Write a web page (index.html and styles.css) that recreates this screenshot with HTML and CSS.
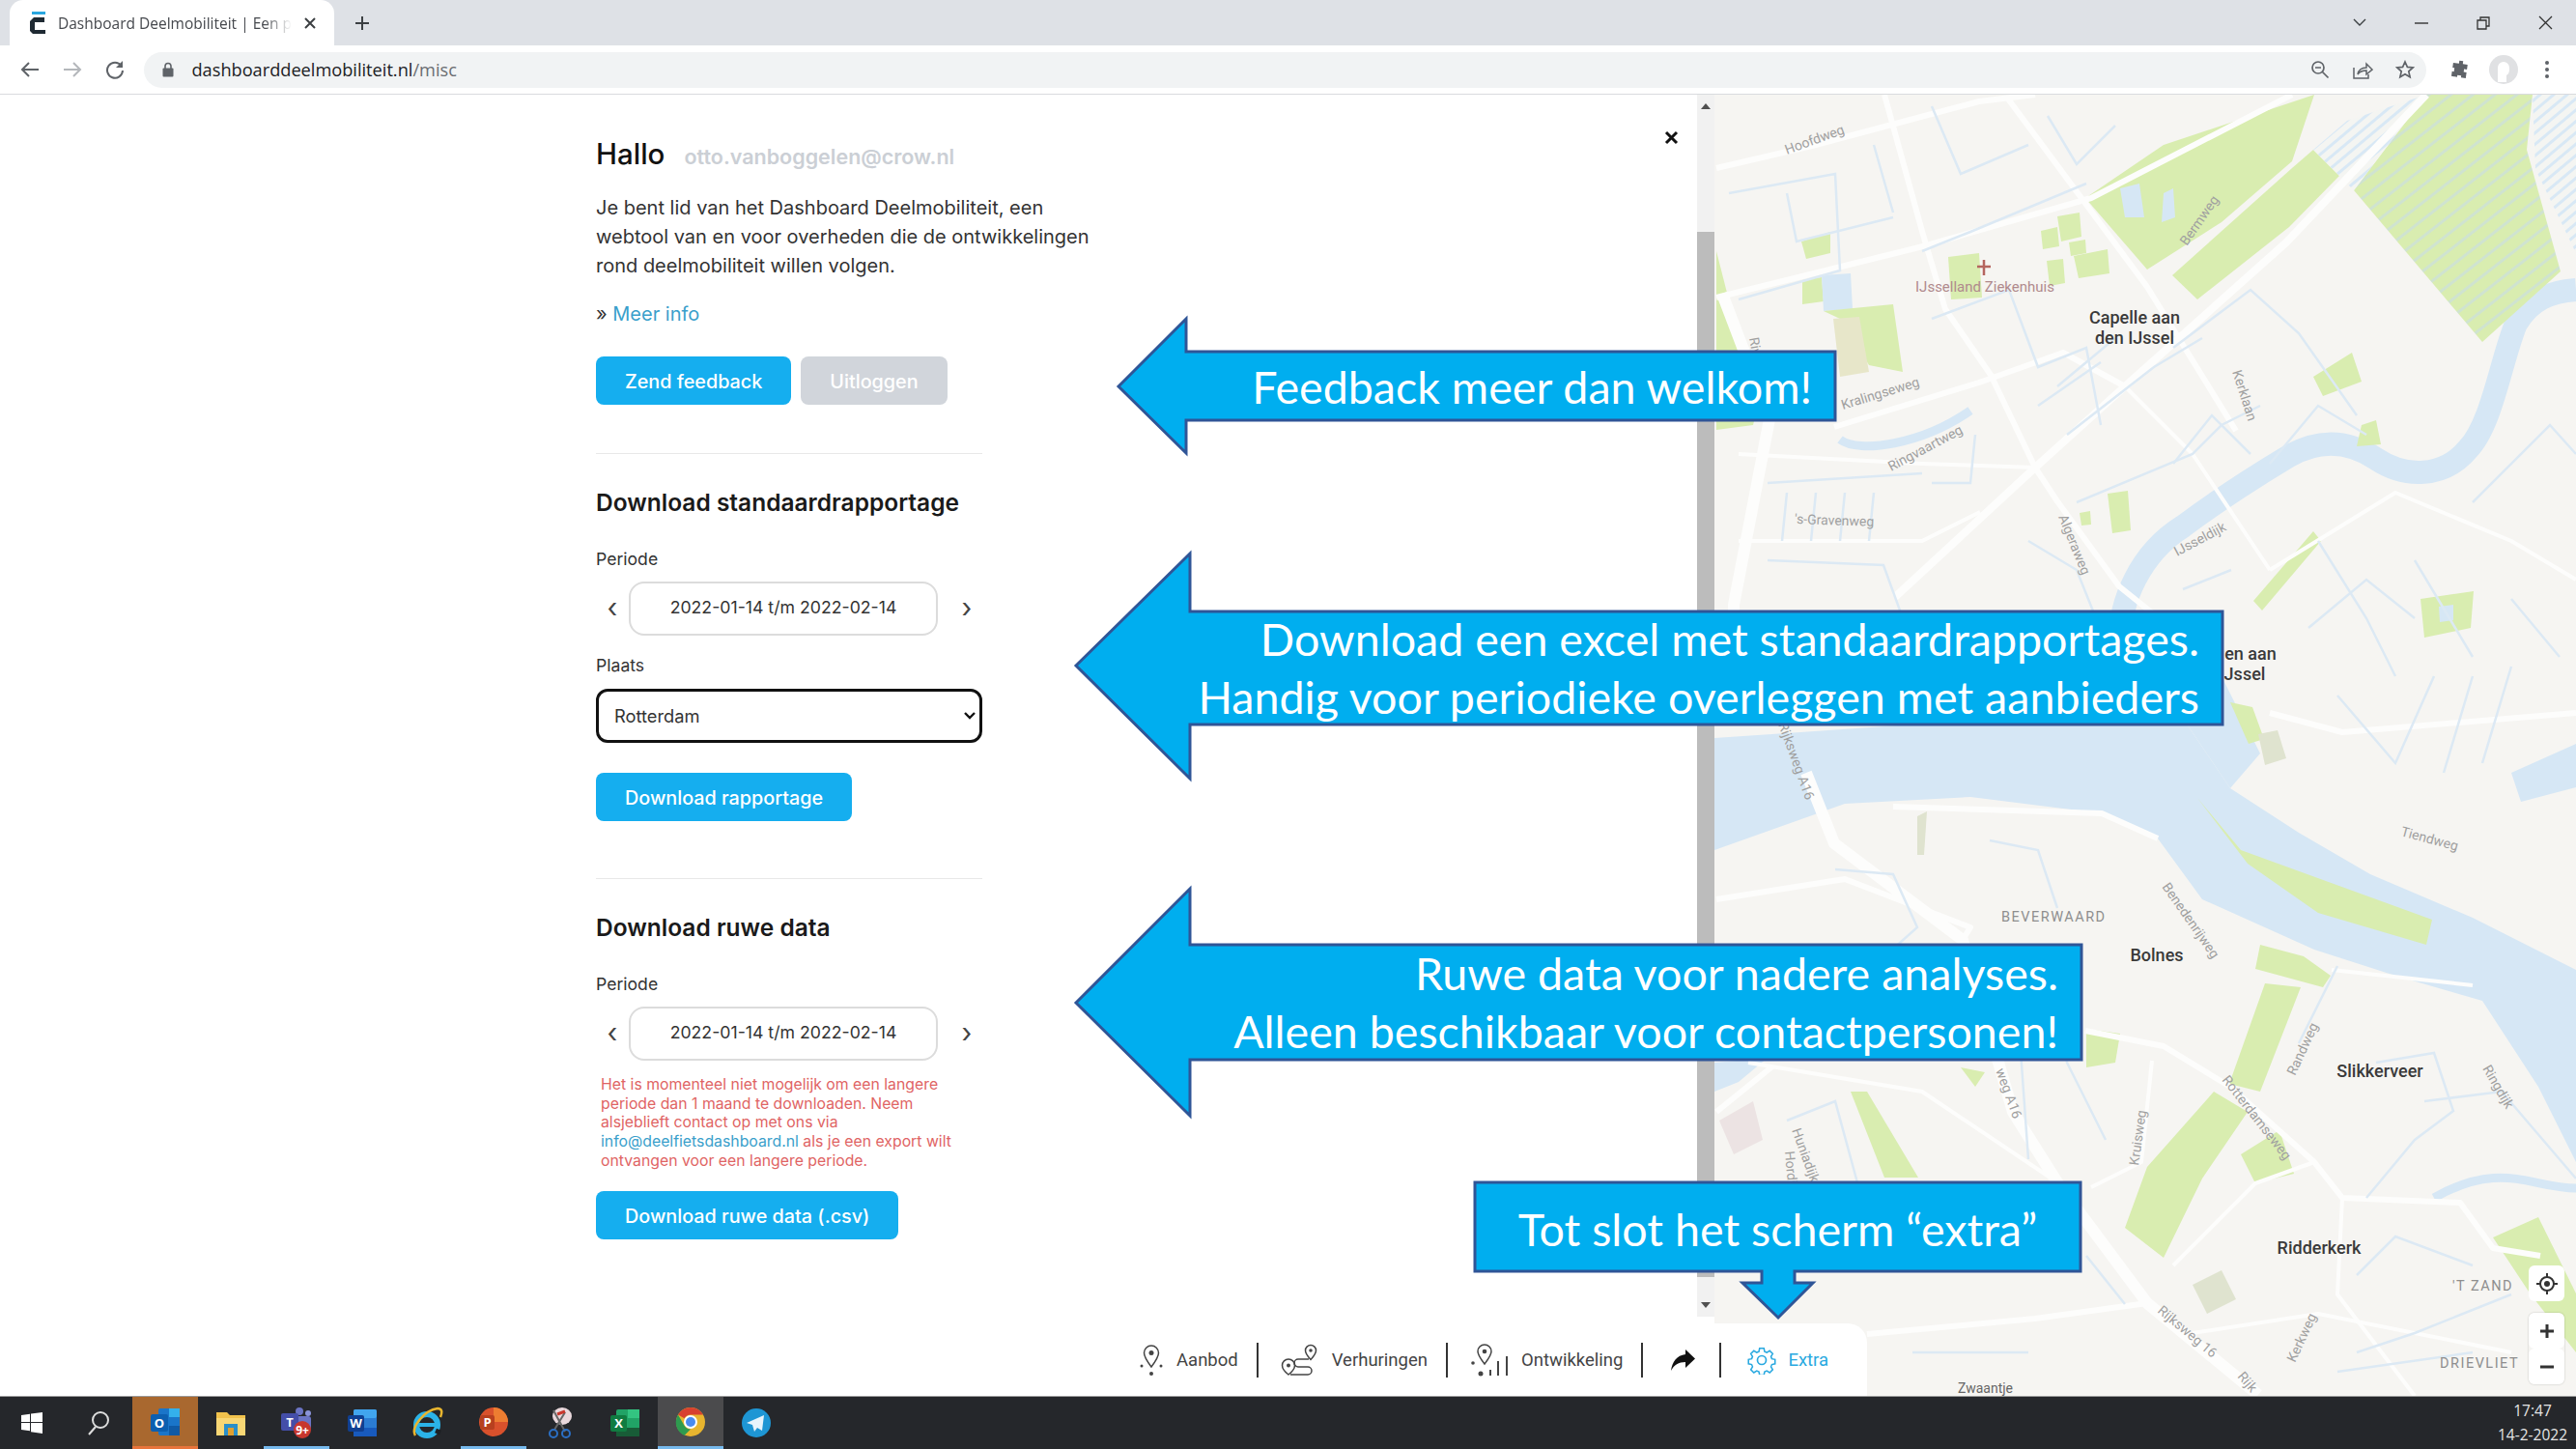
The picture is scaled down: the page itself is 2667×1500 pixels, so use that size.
FILE: index.html
```html
<!DOCTYPE html>
<html lang="en">
<head>
  <meta charset="UTF-8" />
  <title>Dashboard Deelmobiliteit</title>
  <link rel="stylesheet" href="styles.css">
</head>
<body>

  <!-- browser chrome -->
  <div class="tabstrip">
    <div class="tab">
      <svg class="favicon" width="18" height="24" viewBox="0 0 18 24"><rect x="3" y="0" width="14" height="3" fill="#2aa7df"/><path d="M16 6H5L1 10v10l3 3h13v-4H6V11h10z" fill="#1f2a33"/></svg>
      <span class="tab-title">Dashboard Deelmobiliteit | Een platform</span>
      <svg class="tab-close" width="12" height="12" viewBox="0 0 12 12"><path d="M1 1l10 10M11 1L1 11" stroke="#3c4043" stroke-width="2"/></svg>
    </div>
    <div class="tab-new"><svg width="16" height="16" viewBox="0 0 16 16"><path d="M8 1v14M1 8h14" stroke="#3c4043" stroke-width="2"/></svg></div>
    <div class="spacer"></div>
    <div class="tab-list"><svg width="14" height="9" viewBox="0 0 14 9"><path d="M1 1l6 6 6-6" fill="none" stroke="#3c4043" stroke-width="1.4"/></svg></div>
    <div class="win-btn"><svg width="14" height="2" viewBox="0 0 14 2"><path d="M0 1h14" stroke="#333" stroke-width="1.4"/></svg></div>
    <div class="win-btn"><svg width="14" height="14" viewBox="0 0 14 14"><path d="M1 4h9v9H1zM4 4V1h9v9h-3" fill="none" stroke="#333" stroke-width="1.3"/></svg></div>
    <div class="win-btn"><svg width="15" height="15" viewBox="0 0 15 15"><path d="M1 1l13 13M14 1L1 14" stroke="#333" stroke-width="1.3"/></svg></div>
  </div>

  <div class="toolbar">
    <div class="tool"><svg width="20" height="18" viewBox="0 0 20 18"><path d="M19 9H3M9 2L2 9l7 7" fill="none" stroke="#5f6368" stroke-width="2"/></svg></div>
    <div class="tool"><svg width="20" height="18" viewBox="0 0 20 18"><path d="M1 9h16M11 2l7 7-7 7" fill="none" stroke="#b4b7bb" stroke-width="2"/></svg></div>
    <div class="tool"><svg width="20" height="20" viewBox="0 0 20 20"><path d="M16.5 6A8 8 0 1 0 18 11" fill="none" stroke="#5f6368" stroke-width="2"/><path d="M18 1v7h-7z" fill="#5f6368"/></svg></div>
    <div class="omnibox">
      <svg class="lock" width="12" height="16" viewBox="0 0 12 16"><path d="M3 7V4.5a3 3 0 0 1 6 0V7" fill="none" stroke="#5f6368" stroke-width="1.6"/><rect x="0.5" y="6.5" width="11" height="9" rx="1" fill="#5f6368"/></svg>
      <span class="url">dashboarddeelmobiliteit.nl<span class="url-path">/misc</span></span>
      <div class="spacer"></div>
      <div class="tool"><svg width="20" height="20" viewBox="0 0 20 20"><circle cx="8" cy="8" r="6" fill="none" stroke="#5f6368" stroke-width="1.7"/><path d="M5 8h6M12.5 12.5l6 6" stroke="#5f6368" stroke-width="1.7"/></svg></div>
      <div class="tool"><svg width="22" height="20" viewBox="0 0 22 20"><path d="M2 8v11h15v-4" fill="none" stroke="#5f6368" stroke-width="1.5"/><path d="M6 15c1-5 5-7 9-7V4l6 6-6 5v-4c-4 0-7 1-9 4z" fill="none" stroke="#5f6368" stroke-width="1.5"/></svg></div>
      <div class="tool"><svg width="20" height="20" viewBox="0 0 20 20"><path d="M10 2l2.4 5.4 5.8.6-4.4 3.9 1.3 5.8L10 14.700l-5.100 3 1.300-5.800L1.800 8l5.800-.6z" fill="none" stroke="#5f6368" stroke-width="1.700"/></svg></div>
    </div>
    <div class="tool tool-ext"><svg width="20" height="20" viewBox="0 0 20 20"><path d="M8 1h4v3h5v5h-3v3h3v6h-5v-2h-4v2H2v-5h2V9H2V4h6z" fill="#5f6368" transform="rotate(8 10 10)"/></svg></div>
    <div class="tool tool-ext"><svg width="30" height="30" viewBox="0 0 30 30"><circle cx="15" cy="15" r="15" fill="#e0e1e3"/><path d="M9 28V13a6 6 0 0 1 12 0v3a6 6 0 0 1-3 5v7z" fill="#fff"/></svg></div>
    <div class="tool tool-ext"><svg width="6" height="20" viewBox="0 0 6 20"><circle cx="3" cy="3" r="2" fill="#5f6368"/><circle cx="3" cy="10" r="2" fill="#5f6368"/><circle cx="3" cy="17" r="2" fill="#5f6368"/></svg></div>
  </div>

  <!-- page -->
  <div class="main">
    <div class="panel">
      <div class="close-btn"><svg width="15" height="15" viewBox="0 0 15 15"><path d="M2 2l11 11M13 2L2 13" stroke="#111" stroke-width="3"/></svg></div>

      <div class="hello">
        <span class="hello-name">Hallo</span>
        <span class="hello-mail">otto.vanboggelen@crow.nl</span>
      </div>
      <p class="intro">Je bent lid van het Dashboard Deelmobiliteit, een webtool van en voor overheden die de ontwikkelingen rond deelmobiliteit willen volgen.</p>
      <p class="more">» <a href="#">Meer info</a></p>
      <div class="btn-row">
        <button class="btn">Zend feedback</button>
        <button class="btn btn-grey">Uitloggen</button>
      </div>

      <hr class="divider">

      <h2>Download standaardrapportage</h2>
      <label class="field-label">Periode</label>
      <div class="period">
        <span class="period-arrow">‹</span>
        <div class="period-box">2022-01-14 t/m 2022-02-14</div>
        <span class="period-arrow">›</span>
      </div>
      <label class="field-label field-label-place">Plaats</label>
      <div class="place-wrap">
        <select class="place"><option>Rotterdam</option></select>
        <svg class="place-chevron" width="12" height="8" viewBox="0 0 12 8"><path d="M1 1l5 5 5-5" fill="none" stroke="#111" stroke-width="2.4"/></svg>
      </div>
      <button class="btn btn-report">Download rapportage</button>

      <hr class="divider divider-second">

      <h2>Download ruwe data</h2>
      <label class="field-label">Periode</label>
      <div class="period">
        <span class="period-arrow">‹</span>
        <div class="period-box">2022-01-14 t/m 2022-02-14</div>
        <span class="period-arrow">›</span>
      </div>
      <p class="notice">Het is momenteel niet mogelijk om een langere periode dan 1 maand te downloaden. Neem alsjeblieft contact op met ons via <a href="#">info@deelfietsdashboard.nl</a> als je een export wilt ontvangen voor een langere periode.</p>
      <button class="btn btn-raw">Download ruwe data (.csv)</button>
    </div>

    <div class="scrollbar">
      <span class="scroll-up"></span>
      <div class="scroll-thumb"></div>
      <span class="scroll-down"></span>
    </div>

    <div class="map">
      <svg class="map-svg" viewBox="1775 98 892 1347" width="892" height="1347">
        <defs>
          <pattern id="polder" width="14" height="14" patternUnits="userSpaceOnUse" patternTransform="rotate(52)">
            <rect width="14" height="14" fill="#d9edb0"/>
            <rect width="3" height="14" fill="#cfe3d0"/>
          </pattern>
          <pattern id="ditches" width="9" height="9" patternUnits="userSpaceOnUse" patternTransform="rotate(50)">
            <rect width="9" height="9" fill="#f4f5f2"/>
            <rect width="3" height="9" fill="#d8e8f5"/>
          </pattern>
        </defs>
        <rect x="1775" y="98" width="892" height="1347" fill="#f6f5f2"/>

        <g class="map-soft">
        <!-- water -->
        <path class="water" d="M1775 764L1864 758L2050 745L2263 748L2309 816L2380 862L2454 905L2560 950L2667 1004V1203L2628 1125L2570 1036L2480 1010L2396 983L2280 931L2234 868L2176 842L2040 825L1910 832L1775 880Z"/>
        <path class="water" d="M2263 748L2300 700L2340 780L2309 816Z"/>
        <path class="water" d="M1775 1100L1830 1095L1800 1120L1775 1130Z"/>
        <path class="river" d="M2195 680C2190 620 2220 570 2260 545C2300 515 2340 490 2370 472C2400 455 2430 455 2460 475C2490 495 2530 495 2555 465C2580 440 2590 370 2605 335C2620 310 2640 302 2667 300"/>
        <path class="river river-thin" d="M1905 455C1925 470 1990 460 2040 425"/>
        <path class="river river-thin" d="M2520 1240C2590 1200 2620 1230 2667 1230"/>
        <path class="water" d="M2600 800L2667 770V815L2610 830Z"/>

        <!-- parks -->
        <path class="park" d="M2159 205L2240 150L2396 98L2373 167L2300 230L2223 279Z"/>
        <path class="park" d="M2249 285L2373 174L2395 155L2422 182L2370 235L2275 310Z"/>
        <path fill="url(#polder)" d="M2512 98H2622L2616 155L2651 281L2570 354L2437 197Z"/>
        <path fill="url(#ditches)" d="M2622 98H2667V262L2625 175Z"/>
        <path fill="url(#ditches)" d="M2395 155L2430 125L2512 98L2437 197L2422 182Z"/>
        <path class="water" d="M2195 195L2215 190L2220 225L2200 225ZM2240 200L2250 195L2252 225L2238 230Z"/>
        <path class="park" d="M2017 266L2049 262L2052 308L2020 310Z"/>
        <path class="park" d="M2113 239L2130 235L2132 255L2115 258Z"/>
        <path class="park" d="M2130 224L2153 220L2155 245L2134 250Z"/>
        <path class="park" d="M2142 251L2159 248L2160 262L2144 265Z"/>
        <path class="park" d="M2119 270L2136 268L2138 293L2122 296Z"/>
        <path class="park" d="M2147 265L2182 258L2184 283L2152 288Z"/>
        <path class="park" d="M1866 290L1886 287L1888 312L1866 315Z"/>
        <path class="water" d="M1886 285L1916 283L1918 320L1888 322Z"/>
        <path class="park" d="M1888 322L1960 315L1970 385L1935 378L1905 330Z"/>
        <path class="patch-tan" d="M1898 330L1925 328L1935 385L1905 390Z"/>
        <path class="park" d="M1777 260L1800 350L1805 400L1777 400Z"/>
        <path class="park" d="M1777 420L1820 420L1815 440L1777 445Z"/>
        <path class="park" d="M1865 250L1895 240L1895 262L1870 268Z"/>
        <path class="park" d="M2395 390L2435 365L2445 395L2405 410Z"/>
        <path class="park" d="M2445 440L2460 435L2465 460L2440 462Z"/>
        <path class="park" d="M2333 622L2395 550L2403 560L2342 632Z"/>
        <path class="park" d="M2506 620L2561 612L2558 650L2510 660Z"/>
        <path class="water" d="M2525 628L2540 626L2540 642L2526 644Z"/>
        <path class="park" d="M2182 511L2203 508L2206 549L2187 552Z"/>
        <path class="park" d="M2153 531L2164 529L2165 543L2155 544Z"/>
        <path class="park" d="M2309 727L2332 732L2344 765L2328 770Z"/>
        <path class="park-dim" d="M2338 760L2358 756L2367 785L2345 792Z"/>
        <path class="park" d="M2275 826L2320 880L2518 952L2512 978L2400 945L2327 894Z"/>
        <path class="park" d="M2340 978L2385 990L2413 1010L2405 1022L2335 1003Z"/>
        <path class="park" d="M2345 1018L2382 1022L2340 1130L2308 1122Z"/>
        <path class="park" d="M2292 1130L2327 1151L2280 1220L2240 1302L2200 1271L2223 1208Z"/>
        <path class="park" d="M1916 1130L1933 1130L1986 1219L1951 1219Z"/>
        <path class="park" d="M2160 1065L2195 1070L2190 1100L2160 1105Z"/>
        <path class="park" d="M2030 1105L2055 1110L2045 1125Z"/>
        <path class="park" d="M2320 1195L2360 1170L2375 1215L2335 1225Z"/>
        <path class="park" d="M2581 1281L2628 1260L2667 1339V1400L2620 1340Z"/>
        <path class="park-dim" d="M2270 1330L2300 1315L2315 1345L2285 1360Z"/>
        <path class="park-dim" d="M1985 845L1995 840L1992 885L1985 885Z"/>
        <path class="patch" d="M1780 1160L1815 1140L1825 1180L1795 1195Z"/>

        <!-- roads -->
        <path class="road" d="M1777 174L1876 151L2049 105L2107 98"/>
        <path class="road" d="M1951 98L1991 243L2014 320L2061 388L2107 484"/>
        <path class="road road-wide" d="M2512 98L2367 251L2200 400L2107 484L1962 618"/>
        <path class="road" d="M2078 101L2223 297L2315 446"/>
        <path class="road" d="M1777 308L1991 255L2165 205L2373 98"/>
        <path class="road" d="M1899 442L2049 396L2136 365L2200 400"/>
        <path class="road road-main" d="M1783 304L1818 396L1832 434L1795 626L1795 700"/>
        <path class="road" d="M2107 484L2130 519L2194 607L2260 660"/>
        <path class="road road-thin" d="M2200 400L2270 470L2350 590"/>
        <path class="road road-thin" d="M1800 470L1990 480L2107 484"/>
        <path class="road road-thin" d="M2350 590L2480 510L2600 560L2667 600"/>
        <path class="road road-main" d="M1870 800L1899 873L2032 973L2084 1151L2130 1224L2223 1349L2338 1444"/>
        <path class="road" d="M1777 931L1910 910L2040 960L2032 973"/>
        <path class="road" d="M2159 1067L2240 1083L2309 1125L2396 1203L2425 1240L2547 1245L2581 1292L2630 1300"/>
        <path class="road road-thin" d="M2228 1098L2217 1203L2165 1229"/>
        <path class="road" d="M2350 738L2425 758L2667 738"/>
        <path class="road" d="M1933 1381L2107 1365L2223 1349"/>
        <path class="road" d="M1835 1104L1777 1151"/>
        <path class="road road-thin" d="M1810 1100L1990 1130L2130 1224"/>
        <path class="road" d="M1960 835L2176 842L2234 868"/>
        <path class="road road-thin" d="M2414 1004L2560 1020"/>
        <path class="road road-thin" d="M2396 1203L2335 1225L2250 1310"/>
        <path class="road road-thin" d="M2425 1240L2420 1340L2500 1445"/>
        <path class="road road-thin" d="M2270 1380L2400 1360L2600 1400"/>
        <path class="road road-thin" d="M1800 560L1990 560L2050 530"/>

        <!-- canals -->
        <path class="canal" d="M1790 200L1900 180L1905 280L1800 310"/>
        <path class="canal" d="M1990 260L2040 240L2160 190"/>
        <path class="canal" d="M2000 330L2080 300L2110 380L2160 360L2175 440"/>
        <path class="canal" d="M2250 360L2290 330L2330 300L2380 345L2440 430"/>
        <path class="canal" d="M2340 420L2300 440L2270 470L2150 520"/>
        <path class="canal" d="M2000 500L2040 500L2045 450"/>
        <path class="canal" d="M1830 500L1990 490M1850 510L1845 560M1880 510L1875 560M1910 510L1905 560M1940 510L1935 560"/>
        <path class="canal" d="M1830 580L1950 585L1970 640L1820 650"/>
        <path class="canal" d="M2400 560L2450 640L2480 700M2500 580L2560 680"/>
        <path class="canal" d="M2420 720L2480 790L2520 700M2560 700L2530 800M2600 690L2570 790"/>
        <path class="canal" d="M2460 1100L2520 1090L2540 1150L2500 1180L2450 1240"/>
        <path class="canal" d="M2380 1080L2420 1000"/>
        <path class="canal" d="M2090 1060L2100 1200M2130 1020L2140 1100L2180 1180"/>
        <path class="canal" d="M1850 1160L1900 1140L1930 1250M1810 1230L1870 1230"/>
        <path class="canal" d="M2440 1400L2500 1380L2600 1340M2420 1420L2560 1400"/>
        <path class="canal" d="M2160 1300L2200 1350M1980 1400L2100 1400"/>
        <path class="canal" d="M2000 110L2030 180L2100 150M2120 120L2150 170L2190 130"/>
        <path class="canal" d="M1850 200L1860 250L1960 225M1940 150L1960 220"/>
        <path class="canal" d="M2130 400L2190 350M2110 420L2175 375M2140 450L2230 380L2280 350"/>
        <path class="canal" d="M2250 480L2290 430L2330 470M2350 480L2400 420L2450 450"/>
        <path class="canal" d="M2100 560L2150 590L2170 640M2260 610L2310 590M2390 650L2450 600L2500 640"/>
        <path class="canal" d="M2560 520L2640 440L2667 470M2600 620L2650 680"/>
        <path class="canal" d="M1900 900L1960 905L1985 960L1940 1000M2060 870L2110 880L2130 940"/>
        <path class="canal" d="M2440 1320L2480 1280L2560 1310M2510 1140L2590 1130L2667 1220"/>
        </g>

        <!-- labels -->
        <text class="m-road" transform="translate(1850 160) rotate(-20)">Hoofdweg</text>
        <text class="m-road" transform="translate(1908 424) rotate(-17)">Kralingseweg</text>
        <text class="m-road" transform="translate(1958 488) rotate(-28)">Ringvaartweg</text>
        <text class="m-road" transform="translate(1858 542) rotate(2)">'s-Gravenweg</text>
        <text class="m-road" transform="translate(2131 535) rotate(68)">Algeraweg</text>
        <text class="m-road" transform="translate(2254 576) rotate(-28)">IJsseldijk</text>
        <text class="m-road" transform="translate(2264 255) rotate(-55)">Bermweg</text>
        <text class="m-road" transform="translate(2311 385) rotate(72)">Kerklaan</text>
        <text class="m-road" transform="translate(1811 350) rotate(80)">Rivi</text>
        <text class="m-road" transform="translate(1841 750) rotate(70)">Rijksweg A16</text>
        <text class="m-road" transform="translate(2066 1108) rotate(70)">weg A16</text>
        <text class="m-road" transform="translate(2485 865) rotate(15)">Tiendweg</text>
        <text class="m-road" transform="translate(2238 918) rotate(55)">Benedenrijweg</text>
        <text class="m-road" transform="translate(2376 1114) rotate(-65)">Randweg</text>
        <text class="m-road" transform="translate(2570 1106) rotate(60)">Ringdijk</text>
        <text class="m-road" transform="translate(2300 1118) rotate(52)">Rotterdamseweg</text>
        <text class="m-road" transform="translate(2233 1358) rotate(40)">Rijksweg 16</text>
        <text class="m-road" transform="translate(2316 1425) rotate(50)">Rijk</text>
        <text class="m-road" transform="translate(2376 1411) rotate(-65)">Kerkweg</text>
        <text class="m-road" transform="translate(2214 1207) rotate(-82)">Kruisweg</text>
        <text class="m-road" transform="translate(1855 1170) rotate(70)">Huniadijk</text>
        <text class="m-road" transform="translate(1848 1192) rotate(85)">Hordijk</text>
        <text class="m-area" x="2072" y="954">BEVERWAARD</text>
        <text class="m-area" x="2539" y="1336">'T ZAND</text>
        <text class="m-area" x="2526" y="1416">DRIEVLIET</text>
        <text class="m-road m-dark" x="2027" y="1442">Zwaantje</text>
        <text class="m-hospital" x="2055" y="302" text-anchor="middle">IJsselland Ziekenhuis</text>
        <path d="M2054 269v16M2047 276h14" stroke="#b5655f" stroke-width="2.500"/>
        <text class="m-place" x="2210" y="335" text-anchor="middle">Capelle aan</text>
        <text class="m-place" x="2210" y="356" text-anchor="middle">den IJssel</text>
        <text class="m-place" x="2330" y="683" text-anchor="middle">en aan</text>
        <text class="m-place" x="2324" y="704" text-anchor="middle">Jssel</text>
        <text class="m-place" x="2233" y="995" text-anchor="middle">Bolnes</text>
        <text class="m-place" x="2464" y="1115" text-anchor="middle">Slikkerveer</text>
        <text class="m-place" x="2401" y="1298" text-anchor="middle">Ridderkerk</text>
      </svg>

      <div class="map-controls">
        <div class="map-btn"><svg width="22" height="22" viewBox="0 0 22 22"><circle cx="11" cy="11" r="7" fill="none" stroke="#333" stroke-width="2"/><circle cx="11" cy="11" r="3" fill="#333"/><path d="M11 0v4M11 18v4M0 11h4M18 11h4" stroke="#333" stroke-width="2"/></svg></div>
        <div class="map-zoom">
          <div class="map-btn"><svg width="14" height="14" viewBox="0 0 14 14"><path d="M7 0v14M0 7h14" stroke="#333" stroke-width="3"/></svg></div>
          <div class="map-btn"><svg width="14" height="4" viewBox="0 0 14 4"><path d="M0 2h14" stroke="#333" stroke-width="3"/></svg></div>
        </div>
      </div>
    </div>

    <!-- menu floating over the page and the map -->
    <nav class="bottom-nav">
      <a class="nav-item" href="#">
        <svg width="26" height="34" viewBox="0 0 26 34"><path d="M13 2a7.500 7.500 0 0 0-7.500 7.500C5.500 14 13 24 13 24s7.500-10 7.500-14.500A7.500 7.500 0 0 0 13 2z" fill="none" stroke="#444" stroke-width="1.500"/><circle cx="13" cy="9.500" r="2.500" fill="#444"/><circle cx="3" cy="23" r="1.500" fill="#444"/><circle cx="23" cy="23" r="1.500" fill="#444"/><circle cx="13" cy="31" r="2" fill="#444"/></svg>
        Aanbod
      </a>
      <span class="nav-sep"></span>
      <a class="nav-item" href="#">
        <svg width="40" height="34" viewBox="0 0 40 34"><path d="M31 1.500a5.500 5.500 0 0 0-5.500 5.500c0 3.500 5.500 9.500 5.500 9.500s5.500-6 5.500-9.500A5.500 5.500 0 0 0 31 1.500z" fill="none" stroke="#444" stroke-width="1.500"/><circle cx="31" cy="7" r="1.800" fill="#444"/><path d="M8 16a6.500 6.500 0 0 0-6.500 6.500C1.500 27 8 32 8 32s6.500-5 6.500-9.500A6.500 6.500 0 0 0 8 16z" fill="none" stroke="#444" stroke-width="1.500"/><circle cx="8" cy="22.500" r="2" fill="#444"/><path d="M29 16H18a3.500 3.500 0 0 0 0 8h10a3.500 3.500 0 0 1 0 8H10" fill="none" stroke="#444" stroke-width="1.500"/></svg>
        Verhuringen
      </a>
      <span class="nav-sep"></span>
      <a class="nav-item" href="#">
        <svg width="40" height="34" viewBox="0 0 40 34"><path d="M15 1a7 7 0 0 0-7 7c0 4 7 13 7 13s7-9 7-13a7 7 0 0 0-7-7z" fill="none" stroke="#444" stroke-width="1.500"/><circle cx="15" cy="8" r="2.300" fill="#444"/><circle cx="3" cy="20" r="1.800" fill="#444"/><circle cx="11" cy="31" r="2.500" fill="#444"/><path d="M21 33v-6M29 33V18M38 33V13" stroke="#444" stroke-width="2"/></svg>
        Ontwikkeling
      </a>
      <span class="nav-sep"></span>
      <a class="nav-item nav-share" href="#">
        <svg width="27" height="24" viewBox="0 0 27 24"><path d="M16 1l10 9.500L16 20v-6C9 14 4 17 1 23 2 14 7 7 16 6z" fill="#111"/></svg>
      </a>
      <span class="nav-sep"></span>
      <a class="nav-item nav-active" href="#">
        <svg width="30" height="30" viewBox="0 0 30 30"><path d="M12.500 1.500h5l.8 3.700 2.500 1 3.300-2 3.500 3.500-2 3.300 1 2.500 3.700.8v5l-3.700.8-1 2.500 2 3.300-3.500 3.500-3.300-2-2.500 1-.8 3.700h-5l-.8-3.700-2.500-1-3.300 2-3.500-3.500 2-3.300-1-2.500-3.700-.8v-5l3.700-.8 1-2.500-2-3.300 3.500-3.500 3.300 2 2.500-1z" transform="translate(1.500 1.500) scale(.9)" fill="none" stroke="#29a9e0" stroke-width="1.700"/><circle cx="15" cy="15" r="4.500" fill="none" stroke="#29a9e0" stroke-width="1.700"/></svg>
        Extra
      </a>
    </nav>

    <!-- slide annotations on top of the screenshot -->
    <div class="callout callout-feedback">
      <svg width="742" height="139" viewBox="0 0 742 139"><polygon points="0,70 70,0 70,34 742,34 742,105 70,105 70,139"/></svg>
      <div class="callout-text">Feedback meer dan welkom!</div>
    </div>
    <div class="callout callout-report">
      <svg width="1187" height="233" viewBox="0 0 1187 233"><polygon points="0,116 118,0 118,60 1187,60 1187,177 118,177 118,233"/></svg>
      <div class="callout-text">Download een excel met standaardrapportages.<br>Handig voor periodieke overleggen met aanbieders</div>
    </div>
    <div class="callout callout-raw">
      <svg width="1041" height="235" viewBox="0 0 1041 235"><polygon points="0,118 118,0 118,58 1041,58 1041,177 118,177 118,235"/></svg>
      <div class="callout-text">Ruwe data voor nadere analyses.<br>Alleen beschikbaar voor contactpersonen!</div>
    </div>
    <div class="callout callout-extra">
      <svg width="627" height="140" viewBox="0 0 627 140"><polygon points="0,0 627,0 627,92 331,92 331,104 350,104 314,140 277,104 297,104 297,92 0,92"/></svg>
      <div class="callout-text">Tot slot het scherm “extra”</div>
    </div>
  </div>

  <!-- windows taskbar -->
  <div class="taskbar">
    <div class="task task-start"><svg width="22" height="22" viewBox="0 0 22 22"><path d="M0 3l9-1.300V10H0zM10 1.500L22 0v10H10zM0 11h9v8.300L0 18zM10 11h12v11l-12-1.700z" fill="#fff"/></svg></div>
    <div class="task task-search"><svg width="24" height="26" viewBox="0 0 24 26"><circle cx="14" cy="10" r="8" fill="none" stroke="#ddd" stroke-width="2"/><path d="M9 17L2 25" stroke="#ddd" stroke-width="2"/></svg></div>
    <div class="task task-outlook">
      <svg width="34" height="32" viewBox="0 0 34 32"><rect x="10" y="2" width="22" height="28" rx="2" fill="#1a75c9"/><rect x="21" y="2" width="11" height="9" fill="#34b0ec"/><rect x="21" y="20" width="11" height="10" fill="#0f5aa6"/><rect x="2" y="8" width="18" height="18" rx="2" fill="#0c5fb0"/><text class="tile-letter" x="11" y="22" text-anchor="middle">O</text></svg>
    </div>
    <div class="task">
      <svg width="32" height="28" viewBox="0 0 32 28"><path d="M1 3h11l3 3h16v20H1z" fill="#f1c24c"/><rect x="1" y="9" width="30" height="18" fill="#f8d775"/><rect x="9" y="15" width="14" height="12" fill="#2a8fc9"/><rect x="13" y="19" width="6" height="8" fill="#e0a030"/></svg>
    </div>
    <div class="task task-running">
      <svg width="36" height="36" viewBox="0 0 36 36"><circle cx="21" cy="7" r="4" fill="#6b74c4"/><circle cx="30" cy="9" r="3" fill="#8a93d8"/><rect x="15" y="12" width="18" height="14" rx="3" fill="#6b74c4"/><rect x="2" y="9" width="18" height="18" rx="2" fill="#444ea8"/><text class="tile-letter" x="11" y="23" text-anchor="middle">T</text><circle cx="24" cy="26" r="9" fill="#c8372d"/><text class="tile-badge" x="24" y="31" text-anchor="middle">9+</text></svg>
    </div>
    <div class="task">
      <svg width="34" height="32" viewBox="0 0 34 32"><rect x="8" y="2" width="24" height="28" rx="2" fill="#2b7cd3"/><rect x="8" y="2" width="24" height="9" rx="2" fill="#41a5ee"/><rect x="8" y="21" width="24" height="9" fill="#185abd"/><rect x="2" y="8" width="17" height="17" rx="2" fill="#103f91"/><text class="tile-letter" x="10.500" y="21" text-anchor="middle">W</text></svg>
    </div>
    <div class="task">
      <svg width="32" height="34" viewBox="0 0 32 34"><circle cx="15" cy="19" r="11" fill="none" stroke="#2bb3e8" stroke-width="6"/><path d="M6 19h18" stroke="#2bb3e8" stroke-width="4"/><path d="M24 25l5 2" stroke="#1d2024" stroke-width="5"/><path d="M3 30C-2 22 12 4 26 2c5 0 5 4 3 9" fill="none" stroke="#e8b52f" stroke-width="2.500"/></svg>
    </div>
    <div class="task task-running">
      <svg width="34" height="34" viewBox="0 0 34 34"><circle cx="17" cy="17" r="15" fill="#d9512c"/><path d="M17 2a15 15 0 0 1 15 15H17z" fill="#ed7d31"/><rect x="3" y="10" width="15" height="15" rx="2" fill="#b7401f"/><text class="tile-letter" x="10.500" y="22" text-anchor="middle">P</text></svg>
    </div>
    <div class="task">
      <svg width="28" height="34" viewBox="0 0 28 34"><ellipse cx="17" cy="10" rx="10" ry="9" fill="#e9d8dc"/><path d="M8 4l12 22M20 6L9 24" stroke="#666" stroke-width="2"/><circle cx="8" cy="28" r="4" fill="none" stroke="#2b6fc4" stroke-width="2"/><circle cx="21" cy="28" r="4" fill="none" stroke="#2b6fc4" stroke-width="2"/><path d="M12 8l8-3" stroke="#c8372d" stroke-width="3"/></svg>
    </div>
    <div class="task">
      <svg width="34" height="32" viewBox="0 0 34 32"><rect x="8" y="2" width="24" height="28" rx="2" fill="#21a366"/><rect x="20" y="2" width="12" height="9" fill="#33c481"/><rect x="8" y="21" width="24" height="9" fill="#185c37"/><rect x="2" y="8" width="17" height="17" rx="2" fill="#107c41"/><text class="tile-letter" x="10.500" y="21" text-anchor="middle">X</text></svg>
    </div>
    <div class="task task-running task-chrome">
      <svg width="34" height="34" viewBox="0 0 34 34"><circle cx="17" cy="17" r="15" fill="#e8b52f"/><path d="M17 2a15 15 0 0 1 13 7.500H17a7.500 7.500 0 0 0-6.500 3.800L4 9.500A15 15 0 0 1 17 2z" fill="#d8412f"/><path d="M4 9.500l6.500 11.300A7.500 7.500 0 0 0 17 24.500L10.500 31A15 15 0 0 1 4 9.500z" fill="#2e9b4f"/><circle cx="17" cy="17" r="7" fill="#fff"/><circle cx="17" cy="17" r="5" fill="#4a8bf0"/></svg>
    </div>
    <div class="task">
      <svg width="32" height="32" viewBox="0 0 32 32"><circle cx="16" cy="16" r="15" fill="#1e96d4"/><path d="M24 8L6 16l6 2 2 7 3-4 5 3z" fill="#e8f4fb"/></svg>
    </div>
    <div class="spacer"></div>
    <div class="clock"><div>17:47</div><div>14-2-2022</div></div>
  </div>

</body>
</html>
```
FILE: styles.css
```css
html, body {
  margin: 0;
  padding: 0;
  height: 100%;
  overflow: hidden;
}

body {
  font-family: 'Inter', sans-serif;
  color: #222;
  background: white;
}

.spacer {
  flex: 1;
}

/* browser chrome */
.tabstrip {
  height: 47px;
  background: #dee1e6;
  display: flex;
  align-items: center;
  padding-left: 10px;
}

.tab {
  width: 336px;
  height: 47px;
  box-sizing: border-box;
  background: white;
  border-radius: 14px 14px 0 0;
  display: flex;
  align-items: center;
  padding-left: 20px;
  font-family: 'Open Sans', sans-serif;
  font-size: 15.5px;
  color: #45484d;
}

.tab-title {
  width: 242px;
  margin-left: 12px;
  white-space: nowrap;
  overflow: hidden;
  -webkit-mask-image: linear-gradient(to right, black 88%, transparent);
  mask-image: linear-gradient(to right, black 88%, transparent);
}

.tab-close {
  margin-left: 13px;
}

.tab-new {
  width: 58px;
  display: flex;
  justify-content: center;
}

.tab-list {
  width: 44px;
  margin-right: 10px;
  display: flex;
  justify-content: center;
}

.win-btn {
  width: 64px;
  display: flex;
  justify-content: center;
}

.toolbar {
  height: 50px;
  background: white;
  border-bottom: 1px solid #d9dbde;
  display: flex;
  align-items: center;
  padding-left: 9px;
  padding-right: 8px;
}

.tool {
  width: 44px;
  height: 37px;
  display: flex;
  align-items: center;
  justify-content: center;
}

.tool-ext {
  width: 45px;
}

.omnibox {
  width: 2363px;
  height: 37px;
  margin-left: 9px;
  margin-right: 12px;
  background: #f1f3f4;
  border-radius: 19px;
  display: flex;
  align-items: center;
  padding-left: 19px;
  box-sizing: border-box;
  flex-shrink: 0;
}

.url {
  margin-left: 18px;
  font-family: 'Open Sans', sans-serif;
  font-size: 18.2px;
  color: #202124;
}

.url-path {
  color: #6a6d72;
}

/* page */
.main {
  position: relative;
  height: 1347px;
  display: flex;
  overflow: hidden;
}

.panel {
  position: relative;
  width: 1757px;
  box-sizing: border-box;
  padding: 41px 0 0 617px;
  background: white;
}

.close-btn {
  position: absolute;
  left: 1723px;
  top: 36px;
}

.hello {
  display: flex;
  align-items: baseline;
  height: 40px;
  line-height: 40px;
}

.hello-name {
  font-size: 29.5px;
  font-weight: 500;
  color: #111;
}

.hello-mail {
  margin-left: 20px;
  font-size: 21.5px;
  font-weight: 600;
  color: #cbcfd5;
}

.intro {
  width: 530px;
  margin: 21px 0 0;
  font-size: 20px;
  line-height: 30px;
  color: #333;
}

.more {
  margin: 20px 0 0;
  font-size: 20px;
  line-height: 30px;
  color: #333;
}

a {
  color: #3a9fcb;
  text-decoration: none;
}

.btn-row {
  display: flex;
  gap: 10px;
  margin-top: 29px;
}

.btn {
  display: block;
  height: 50px;
  padding: 2px 30px 0;
  background: #15aeef;
  color: white;
  border: none;
  border-radius: 8px;
  font-family: 'Inter', sans-serif;
  font-size: 19.8px;
  font-weight: 500;
  cursor: pointer;
}

.btn-grey {
  background: #d1d5db;
}

.btn-report {
  margin-top: 31px;
}

.btn-raw {
  margin-top: 21px;
}

.divider {
  width: 400px;
  height: 1px;
  margin: 50px 0 0;
  border: none;
  background: #e8e8e8;
}

.divider-second {
  margin-top: 59px;
}

h2 {
  margin: 32px 0 0;
  font-size: 24.5px;
  font-weight: 600;
  line-height: 36px;
  color: #1a1a1a;
}

.field-label {
  display: block;
  margin-top: 29px;
  font-size: 17.6px;
  line-height: 24px;
  color: #333;
}

.field-label-place {
  margin-top: 19px;
}

.period {
  display: flex;
  align-items: center;
  margin-top: 11px;
}

.period-arrow {
  width: 34px;
  text-align: center;
  font-size: 28px;
  line-height: 28px;
  margin-bottom: 2px;
  color: #444;
}

.period-arrow:last-child {
  width: 60px;
}

.period-box {
  width: 320px;
  height: 56px;
  box-sizing: border-box;
  border: 2px solid #dcdcdc;
  border-radius: 16px;
  display: flex;
  align-items: center;
  justify-content: center;
  padding-bottom: 4px;
  font-size: 17.7px;
  color: #333;
}

.place-wrap {
  position: relative;
  width: 400px;
  margin-top: 12px;
}

.place {
  display: block;
  width: 400px;
  height: 56px;
  padding-left: 16px;
  border: 3px solid #111;
  border-radius: 12px;
  background: white;
  font-family: 'Inter', sans-serif;
  font-size: 18.3px;
  color: #333;
  -webkit-appearance: none;
  appearance: none;
}

.place-chevron {
  position: absolute;
  right: 7px;
  top: 24px;
}

.notice {
  width: 375px;
  margin: 15px 0 0 5px;
  font-size: 15.8px;
  line-height: 19.7px;
  color: #df6464;
}

.scrollbar {
  width: 18px;
  height: 1265px;
  background: #f1f1f1;
  position: relative;
}

.scroll-up, .scroll-down {
  position: absolute;
  left: 4px;
  width: 0;
  height: 0;
  border-left: 5px solid transparent;
  border-right: 5px solid transparent;
}

.scroll-up {
  top: 9px;
  border-bottom: 6px solid #505050;
}

.scroll-down {
  bottom: 9px;
  border-top: 6px solid #505050;
}

.scroll-thumb {
  margin-top: 142px;
  height: 1082px;
  background: #bcbcbc;
}

/* map */
.map {
  position: relative;
  flex: 1;
  height: 1347px;
  overflow: hidden;
}

.map-svg {
  display: block;
}

.map-soft {
  filter: blur(0.7px);
}

.water {
  fill: #d6e7f5;
}

.river {
  fill: none;
  stroke: #d6e7f5;
  stroke-width: 24;
}

.river-thin {
  stroke-width: 9;
}

.park {
  fill: #d9edb0;
}

.park-dim {
  fill: #dfe3cf;
}

.patch {
  fill: #ece3e3;
}

.patch-tan {
  fill: #e7e6c9;
}

.road {
  fill: none;
  stroke: #fdfdfc;
  stroke-width: 6;
  stroke-linejoin: round;
}

.road-wide {
  stroke-width: 8;
}

.road-main {
  stroke-width: 12;
}

.road-thin {
  stroke-width: 4;
}

.canal {
  fill: none;
  stroke: #dce9f4;
  stroke-width: 2.5;
}

.m-road {
  font-family: 'Roboto', sans-serif;
  font-size: 14px;
  fill: #a0a0a0;
}

.m-dark {
  fill: #666;
}

.m-area {
  font-family: 'Roboto', sans-serif;
  font-size: 14.5px;
  letter-spacing: 1.5px;
  fill: #8e8e8e;
}

.m-hospital {
  font-family: 'Roboto', sans-serif;
  font-size: 15px;
  fill: #b08a8d;
}

.m-place {
  font-family: 'Roboto', sans-serif;
  font-size: 18px;
  font-weight: 500;
  fill: #3a3a3a;
}

.map-controls {
  position: absolute;
  right: 12px;
  bottom: 12px;
  display: flex;
  flex-direction: column;
  gap: 12px;
}

.map-btn {
  width: 37px;
  height: 37px;
  background: white;
  border-radius: 6px;
  display: flex;
  align-items: center;
  justify-content: center;
}

.map-zoom {
  display: flex;
  flex-direction: column;
  box-shadow: 0 0 2px rgba(0,0,0,0.25);
  border-radius: 6px;
}

/* bottom menu */
.bottom-nav {
  position: absolute;
  left: 1140px;
  bottom: 0;
  width: 793px;
  height: 75px;
  box-sizing: border-box;
  padding-left: 39px;
  background: white;
  border-radius: 0 20px 0 0;
  display: flex;
  align-items: center;
  font-family: 'Roboto', sans-serif;
  font-size: 18.5px;
}

.nav-item {
  display: flex;
  align-items: center;
  gap: 13px;
  color: #444;
}

.nav-share {
  margin: 0 5px;
}

.nav-active {
  color: #29a9e0;
  gap: 12px;
  margin-left: 4px;
}

.nav-sep {
  width: 2px;
  height: 36px;
  margin: 0 23px 0 19px;
  background: #333;
}

/* annotations */
.callout {
  position: absolute;
}

.callout svg {
  display: block;
  overflow: visible;
}

.callout polygon {
  fill: #00aeef;
  stroke: #2f5597;
  stroke-width: 3;
}

.callout-text {
  position: absolute;
  right: 24px;
  font-family: 'Lato', sans-serif;
  font-size: 46.6px;
  line-height: 60px;
  color: white;
  text-align: right;
  white-space: nowrap;
}

.callout-feedback {
  left: 1158px;
  top: 232px;
}

.callout-feedback .callout-text {
  top: 40px;
}

.callout-report {
  left: 1114px;
  top: 475px;
}

.callout-report .callout-text {
  top: 58px;
}

.callout-raw {
  left: 1114px;
  top: 822px;
}

.callout-raw .callout-text {
  top: 57px;
}

.callout-extra {
  left: 1527px;
  top: 1126px;
}

.callout-extra .callout-text {
  top: 18px;
  left: 0;
  right: auto;
  width: 627px;
  text-align: center;
}

/* taskbar */
.taskbar {
  height: 55px;
  background: #25272b;
  display: flex;
  align-items: stretch;
  box-sizing: border-box;
  border-top: 1px solid #9a9a9a;
}

.task {
  width: 68px;
  display: flex;
  align-items: center;
  justify-content: center;
  box-sizing: border-box;
}

.task-start {
  width: 66px;
}

.task-search {
  width: 71px;
}

.task-outlook {
  background: #a9682f;
  border-bottom: 3px solid #e8743b;
}

.task-running {
  border-bottom: 3px solid #76b9ed;
}

.task-chrome {
  background: #4b4b4d;
}

.tile-letter {
  font-family: 'Open Sans', sans-serif;
  font-size: 13px;
  font-weight: 700;
  fill: white;
}

.tile-badge {
  font-family: 'Open Sans', sans-serif;
  font-size: 12px;
  font-weight: 700;
  fill: white;
}

.clock {
  width: 90px;
  text-align: center;
  font-family: 'Open Sans', sans-serif;
  font-size: 15.5px;
  line-height: 25px;
  color: #e4e4e4;
  align-self: center;
}
```
